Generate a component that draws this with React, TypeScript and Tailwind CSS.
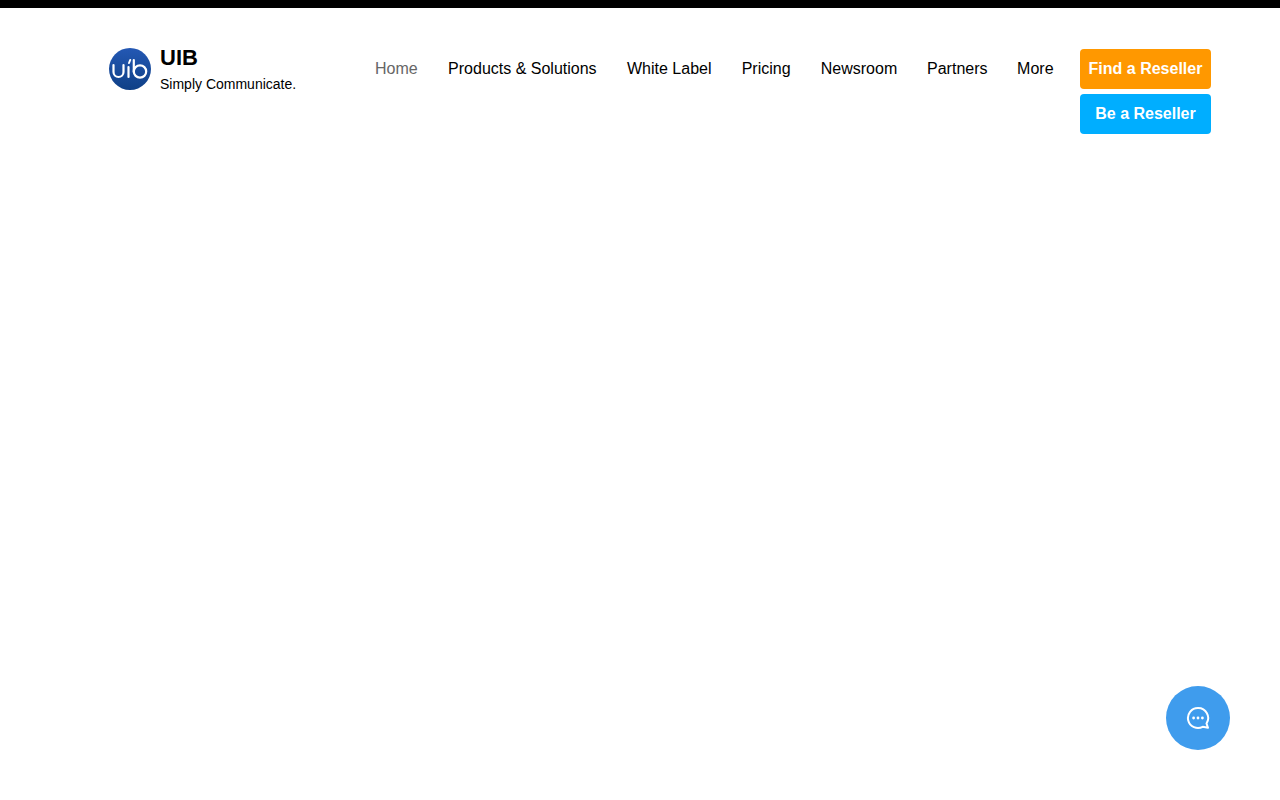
import React from "react";

const links = [
  { label: "Home", cls: "text-[#666666]" },
  { label: "Products & Solutions", cls: "text-black ml-[30.4px]" },
  { label: "White Label", cls: "text-black ml-[30.4px]" },
  { label: "Pricing", cls: "text-black ml-[30.2px]" },
  { label: "Newsroom", cls: "text-black ml-[30.2px]" },
  { label: "Partners", cls: "text-black ml-[29.8px]" },
  { label: "More", cls: "text-black ml-[29.6px]" },
];

function Logo() {
  return (
    <svg width="42" height="42" viewBox="0 0 42 42" className="block shrink-0">
      <defs>
        <linearGradient id="lg" x1="0" y1="0" x2="0" y2="1">
          <stop offset="0" stopColor="#2458b4" />
          <stop offset="1" stopColor="#0f4086" />
        </linearGradient>
      </defs>
      <circle cx="21" cy="21" r="21" fill="url(#lg)" />
      <path d="M4.5 17v7a5 5 0 0 0 10 0v-7" fill="none" stroke="#fff" strokeWidth="2.2" strokeLinecap="round" />
      <path d="M19.5 19v10" fill="none" stroke="#fff" strokeWidth="2.2" strokeLinecap="round" />
      <path d="M20 15l1.2-3" fill="none" stroke="#fff" strokeWidth="2" strokeLinecap="round" />
      <path d="M24.8 12v12" fill="none" stroke="#fff" strokeWidth="2.2" strokeLinecap="round" />
      <circle cx="31" cy="23.5" r="6.2" fill="none" stroke="#fff" strokeWidth="2.2" />
    </svg>
  );
}

function ChatIcon() {
  return (
    <svg width="24" height="24" viewBox="0 0 24 24" fill="none">
      <path d="M12 2a10 10 0 1 0 4.7 18.8l5.3 1-1.5-4.3A10 10 0 0 0 12 2Z" stroke="#fff" strokeWidth="2" strokeLinejoin="round" />
      <circle cx="7.6" cy="12" r="1.4" fill="#fff" />
      <circle cx="12" cy="12" r="1.4" fill="#fff" />
      <circle cx="16.4" cy="12" r="1.4" fill="#fff" />
    </svg>
  );
}

export default function App() {
  return (
    <div className="relative min-h-[800px] bg-white font-['Liberation_Sans',Arial,sans-serif] overflow-hidden">
      <div className="h-2 bg-black" />
      <header className="flex items-start pl-[109px] pt-[41px]">
        <div className="flex items-start w-[266px] h-[42px]">
          <span className="-mt-px"><Logo /></span>
          <div className="ml-[9px] flex flex-col">
            <span className="text-[22px] leading-[20px] font-bold text-black -mt-px">UIB</span>
            <span className="text-[14px] leading-[16px] mt-[8px] text-black">Simply Communicate.</span>
          </div>
        </div>
        <nav className="flex items-center h-10 text-base w-[705px] shrink-0">
          {links.map((l) => (
            <a key={l.label} className={l.cls}>{l.label}</a>
          ))}
        </nav>
        <div className="flex flex-col gap-[5px] shrink-0">
          <a className="flex items-center justify-center w-[131px] h-10 rounded bg-[#ff9800] text-white font-bold text-base">Find a Reseller</a>
          <a className="flex items-center justify-center w-[131px] h-10 rounded bg-[#00aeff] text-white font-bold text-base">Be a Reseller</a>
        </div>
      </header>
      <button className="absolute left-[1166px] top-[686px] flex items-center justify-center w-16 h-16 rounded-full bg-[#3f9ced]">
        <ChatIcon />
      </button>
    </div>
  );
}
